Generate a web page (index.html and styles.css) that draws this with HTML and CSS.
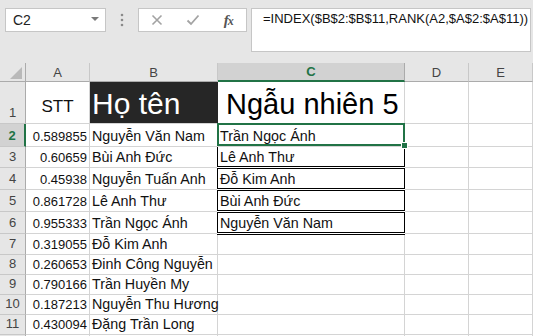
FILE: index.html
```html
<!DOCTYPE html>
<html lang="vi">
<head>
<meta charset="utf-8">
<title>Excel</title>
<link rel="stylesheet" href="styles.css">
</head>
<body>
<div class="toolbar">
  <div class="namebox"><span>C2</span><span class="caret"></span></div>
  <div class="grip">
    <svg width="4" height="14" viewBox="0 0 4 14"><circle cx="2" cy="2" r="1.3" fill="#8a8a8a"/><circle cx="2" cy="7" r="1.3" fill="#8a8a8a"/><circle cx="2" cy="12" r="1.3" fill="#8a8a8a"/></svg>
  </div>
  <div class="fxbox">
    <span class="slot"><svg width="12" height="12" viewBox="0 0 12 12"><path d="M1.5 1.5 L10.5 10.5 M10.5 1.5 L1.5 10.5" stroke="#a3a3a3" stroke-width="1.6" fill="none"/></svg></span>
    <span class="slot"><svg width="14" height="12" viewBox="0 0 14 12"><path d="M1.5 6.5 L5 10 L12.5 1.5" stroke="#a3a3a3" stroke-width="1.8" fill="none"/></svg></span>
    <span class="slot"><i class="fx">f<span class="fxx">x</span></i></span>
  </div>
  <div class="formula">=INDEX($B$2:$B$11,RANK(A2,$A$2:$A$11))</div>
</div>

<div class="sheet">
  <div class="corner"><svg width="13" height="13" viewBox="0 0 13 13"><path d="M12 0 L12 12 L0 12 Z" fill="#b9b9b9"/></svg></div>
  <div class="ch">A</div>
  <div class="ch">B</div>
  <div class="ch selcol">C</div>
  <div class="ch">D</div>
  <div class="ch">E</div>

  <div class="rh">1</div>
  <div class="c title-a">STT</div>
  <div class="c title-b">Họ tên</div>
  <div class="c title-c">Ngẫu nhiên 5</div>
  <div class="c"></div>
  <div class="c"></div>

  <div class="rh selrow">2</div>
  <div class="c num">0.589855</div>
  <div class="c">Nguyễn Văn Nam</div>
  <div class="c active">Trần Ngọc Ánh<span class="selbox"><span class="handle"></span></span></div>
  <div class="c"></div>
  <div class="c"></div>

  <div class="rh">3</div>
  <div class="c num">0.60659</div>
  <div class="c edge">Bùi Anh Đức</div>
  <div class="c boxed">Lê Anh Thư</div>
  <div class="c"></div>
  <div class="c"></div>

  <div class="rh">4</div>
  <div class="c num">0.45938</div>
  <div class="c edge">Nguyễn Tuấn Anh</div>
  <div class="c boxed">Đỗ Kim Anh</div>
  <div class="c"></div>
  <div class="c"></div>

  <div class="rh">5</div>
  <div class="c num">0.861728</div>
  <div class="c edge">Lê Anh Thư</div>
  <div class="c boxed">Bùi Anh Đức</div>
  <div class="c"></div>
  <div class="c"></div>

  <div class="rh">6</div>
  <div class="c num">0.955333</div>
  <div class="c edge">Trần Ngọc Ánh</div>
  <div class="c boxed">Nguyễn Văn Nam</div>
  <div class="c"></div>
  <div class="c"></div>

  <div class="rh">7</div>
  <div class="c num">0.319055</div>
  <div class="c">Đỗ Kim Anh</div>
  <div class="c"></div>
  <div class="c"></div>
  <div class="c"></div>

  <div class="rh">8</div>
  <div class="c num">0.260653</div>
  <div class="c">Đinh Công Nguyễn</div>
  <div class="c"></div>
  <div class="c"></div>
  <div class="c"></div>

  <div class="rh">9</div>
  <div class="c num">0.790166</div>
  <div class="c">Trần Huyền My</div>
  <div class="c"></div>
  <div class="c"></div>
  <div class="c"></div>

  <div class="rh">10</div>
  <div class="c num">0.187213</div>
  <div class="c">Nguyễn Thu Hương</div>
  <div class="c"></div>
  <div class="c"></div>
  <div class="c"></div>

  <div class="rh">11</div>
  <div class="c num">0.430094</div>
  <div class="c">Đặng Trần Long</div>
  <div class="c"></div>
  <div class="c"></div>
  <div class="c"></div>

  <div class="rh"></div>
  <div class="c"></div>
  <div class="c"></div>
  <div class="c"></div>
  <div class="c"></div>
  <div class="c"></div>
</div>
</body>
</html>
```

FILE: styles.css
```css
html, body {
  margin: 0;
  padding: 0;
}
body {
  width: 533px;
  height: 336px;
  overflow: hidden;
  background: #ffffff;
  font-family: "Liberation Sans", Arial, sans-serif;
  color: #111;
}

/* ---------- formula bar area ---------- */
.toolbar {
  height: 63px;
  box-sizing: border-box;
  padding: 8px 0 0 5px;
  background: #e6e6e6;
  display: flex;
  align-items: flex-start;
}
.namebox {
  width: 101px;
  height: 24px;
  box-sizing: border-box;
  background: #fff;
  border: 1px solid #c6c6c6;
  display: flex;
  align-items: center;
  justify-content: space-between;
  padding: 0 6px 0 7px;
  font-size: 14px;
  color: #222;
}
.caret {
  width: 0;
  height: 0;
  border-left: 4px solid transparent;
  border-right: 4px solid transparent;
  border-top: 4px solid #7a7a7a;
  margin-top: -2px;
}
.grip {
  width: 32px;
  height: 24px;
  display: flex;
  align-items: center;
  justify-content: center;
}
.fxbox {
  width: 109px;
  height: 24px;
  box-sizing: border-box;
  background: #fff;
  border: 1px solid #c6c6c6;
  display: flex;
  align-items: center;
}
.slot {
  width: 36px;
  height: 22px;
  display: flex;
  align-items: center;
  justify-content: center;
}
.fx {
  font-family: "Liberation Serif", "Times New Roman", serif;
  font-style: italic;
  font-weight: bold;
  font-size: 15px;
  color: #555;
  letter-spacing: -1px;
}
.fxx {
  font-size: 12px;
}
.formula {
  margin-left: 4px;
  width: 280px;
  height: 44px;
  box-sizing: border-box;
  background: #fff;
  border: 1px solid #c6c6c6;
  padding: 2px 0 0 11px;
  font-size: 13px;
  line-height: 16px;
  color: #111;
  white-space: nowrap;
}

/* ---------- sheet grid ---------- */
.sheet {
  display: grid;
  grid-template-columns: 26px 64px 128px 187px 64px 64px;
  grid-template-rows: 19px 42px 23px 21px 22px 22px 22px 21px 20px 20px 20px 20px 2px;
}
.corner {
  background: #e6e6e6;
  border-right: 1px solid #ababab;
  border-bottom: 1px solid #ababab;
  box-sizing: border-box;
  display: flex;
  align-items: flex-end;
  justify-content: flex-end;
  padding: 0 2px 1px 0;
}
.ch {
  background: #e6e6e6;
  border-right: 1px solid #c8c8c8;
  border-bottom: 1px solid #ababab;
  box-sizing: border-box;
  display: flex;
  align-items: center;
  justify-content: center;
  font-size: 13px;
  color: #444;
}
.ch.selcol {
  background: #d2d2d2;
  color: #217346;
  font-weight: bold;
  border-bottom: 2px solid #217346;
  border-right-color: #ababab;
}
.rh {
  background: #e6e6e6;
  border-right: 1px solid #ababab;
  border-bottom: 1px solid #c8c8c8;
  box-sizing: border-box;
  display: flex;
  align-items: flex-end;
  justify-content: center;
  font-size: 13px;
  line-height: 16px;
  padding-bottom: 2px;
  color: #444;
}
.rh.selrow {
  background: #d2d2d2;
  color: #217346;
  font-weight: bold;
  border-right: 2px solid #217346;
}

.c {
  position: relative;
  box-sizing: border-box;
  border-right: 1px solid #d4d4d4;
  border-bottom: 1px solid #d4d4d4;
  display: flex;
  align-items: flex-end;
  padding: 0 2px 1px 2px;
  font-size: 14.3px;
  line-height: 17px;
  white-space: nowrap;
  color: #111;
}
.c.num {
  justify-content: flex-end;
  font-size: 13px;
  padding-right: 2px;
}

/* row 1 titles */
.title-a {
  justify-content: center;
  font-size: 17px;
  line-height: 20px;
  padding-bottom: 6px;
}
.title-b {
  background: #262626;
  color: #fff;
  font-size: 30px;
  line-height: 34px;
  padding-bottom: 2px;
  border-right-color: #262626;
}
.title-c {
  font-size: 29px;
  line-height: 34px;
  padding-left: 8px;
  padding-bottom: 2px;
  color: #000;
}

/* borders around the result list */
.c.edge {
  border-right-color: #000;
}
.c.boxed {
  border-right-color: #000;
}
.c.boxed::after {
  content: "";
  position: absolute;
  left: -1px;
  right: -1px;
  bottom: -2px;
  height: 3px;
  box-sizing: border-box;
  background: #fff;
  border-top: 1px solid #000;
  border-bottom: 1px solid #000;
  z-index: 1;
}

/* active cell selection */
.selbox {
  position: absolute;
  left: -1px;
  top: -1px;
  width: 188px;
  height: 23px;
  box-sizing: border-box;
  border: 2px solid #217346;
  z-index: 2;
}
.handle {
  position: absolute;
  right: -5px;
  bottom: -5px;
  width: 5px;
  height: 5px;
  background: #217346;
  border: 1px solid #fff;
}
```
